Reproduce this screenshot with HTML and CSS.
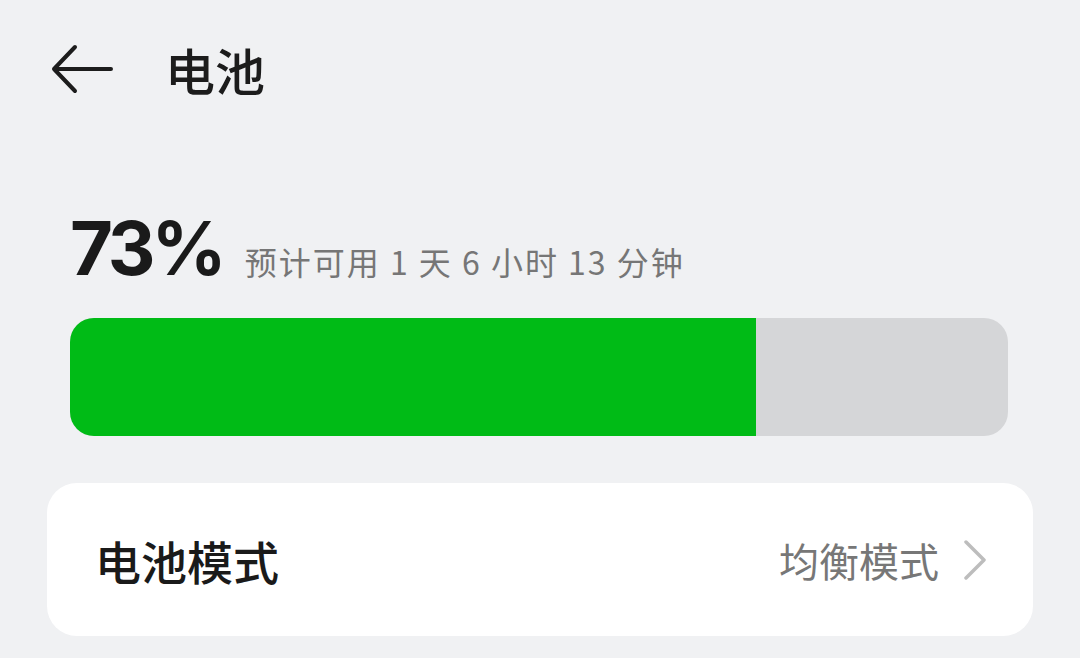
FILE: index.html
```html
<!DOCTYPE html>
<html lang="zh">
<head>
<meta charset="utf-8">
<link rel="stylesheet" href="styles.css">
</head>
<body>
<div class="page">
  <header class="topbar">
    <svg class="back" width="62" height="50" viewBox="0 0 62 50">
      <path d="M24 3 L3 25 L24 47 M3 25 H60" fill="none" stroke="#1c1c1c" stroke-width="4" stroke-linecap="round" stroke-linejoin="round"/>
    </svg>
    <h1 class="title">电池</h1>
  </header>
  <section class="status">
    <div class="level-row">
      <span class="level">73%</span>
      <span class="estimate">预计可用 1 天 6 小时 13 分钟</span>
    </div>
    <div class="bar"><div class="fill" style="width:73.1%"></div></div>
  </section>
  <section class="card">
    <span class="card-label">电池模式</span>
    <span class="card-value">均衡模式
      <svg class="chev" width="24" height="40" viewBox="0 0 24 40"><path d="M3 2 L21 20 L3 38" fill="none" stroke="#bdbdbd" stroke-width="3.5" stroke-linecap="round" stroke-linejoin="round"/></svg>
    </span>
  </section>
</div>
</body>
</html>
```

FILE: styles.css
```css
html, body {
  margin: 0;
  padding: 0;
  background: #f0f1f3;
}
body {
  font-family: "Noto Sans CJK SC", "Noto Sans", sans-serif;
  width: 1080px;
  height: 658px;
  overflow: hidden;
}
.page {
  padding: 0 47px 0 0;
  display: flex;
  flex-direction: column;
}
.topbar {
  display: flex;
  align-items: center;
  height: 50px;
  margin-top: 44px;
  padding-left: 51px;
  gap: 52px;
}
.title {
  margin: 0;
  font-size: 50px;
  font-weight: 500;
  color: #1c1c1c;
  line-height: 50px;
}
.status {
  margin-top: 114px;
  padding-left: 70px;
  padding-right: 25px;
}
.level-row {
  display: flex;
  align-items: baseline;
  gap: 22px;
  height: 80px;
}
.level {
  font-family: "Inter", "Roboto", sans-serif;
  font-weight: 700;
  font-size: 74px;
  line-height: 80px;
  color: #1a1a1a;
  letter-spacing: -4px;
}
.estimate {
  font-family: "Noto Sans CJK SC", sans-serif;
  font-size: 32px;
  letter-spacing: 2px;
  color: #767676;
}
.bar {
  margin-top: 30px;
  height: 118px;
  border-radius: 24px;
  background: #d5d6d8;
  overflow: hidden;
}
.fill {
  height: 100%;
  background: #00bb16;
}
.card {
  margin-top: 47px;
  margin-left: 47px;
  height: 153px;
  background: #ffffff;
  border-radius: 30px;
  display: flex;
  align-items: center;
  justify-content: space-between;
  padding: 0 46px 0 48px;
}
.card-label {
  font-size: 46px;
  color: #1a1a1a;
  font-weight: 500;
}
.card-value {
  display: flex;
  align-items: center;
  gap: 24px;
  font-size: 40px;
  color: #777777;
}
.chev {
  display: block;
}
```
